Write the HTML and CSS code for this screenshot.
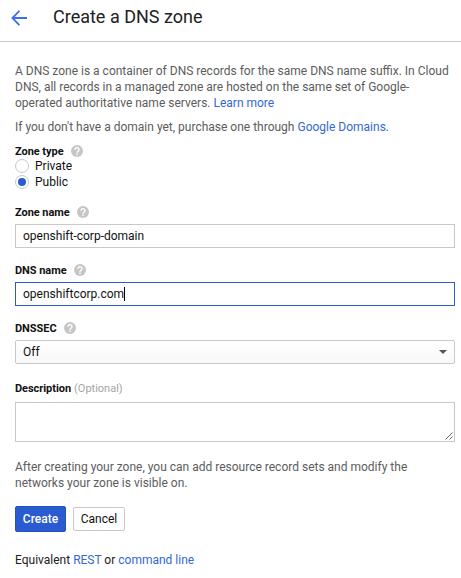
FILE: index.html
```html
<!DOCTYPE html>
<html lang="en">
<head>
<meta charset="utf-8">
<title>Create a DNS zone</title>
<link rel="stylesheet" href="styles.css">
</head>
<body>
<svg class="defs" aria-hidden="true"><symbol id="help" viewBox="0 0 12 12"><circle cx="6" cy="6" r="6" fill="#c6c6c6"/><path d="M4 4.7a2 1.9 0 1 1 3.1 1.45C6.4 6.65 6 6.9 6 7.7M6 8.5v1.4" fill="none" stroke="#fff" stroke-width="1.4"/></symbol></svg>
<header class="header">
  <svg class="back" viewBox="0 0 16 16"><path d="M16 8H1.6M8.4 .9L1.4 8l7 7.1" fill="none" stroke="#3b70e7" stroke-width="1.8"/></svg>
  <h1 class="title">Create a DNS zone</h1>
</header>
<main class="content">
  <p class="text intro">A DNS zone is a container of DNS records for the same DNS name suffix. In Cloud<br>DNS, all records in a managed zone are hosted on the same set of Google-<br>operated authoritative name servers. <a>Learn more</a></p>
  <p class="text purchase">If you don't have a domain yet, purchase one through <a>Google Domains</a>.</p>
  <section class="zone-type">
    <div class="label"><span>Zone type</span><svg class="help"><use href="#help"/></svg></div>
    <div class="option"><span class="radio"></span>Private</div>
    <div class="option"><span class="radio checked"></span>Public</div>
  </section>
  <section class="field">
    <div class="label"><span>Zone name</span><svg class="help"><use href="#help"/></svg></div>
    <div class="input"><span>openshift-corp-domain</span></div>
  </section>
  <section class="field">
    <div class="label"><span>DNS name</span><svg class="help"><use href="#help"/></svg></div>
    <div class="input focused"><span>openshiftcorp.com</span><i class="caret"></i></div>
  </section>
  <section class="field">
    <div class="label"><span>DNSSEC</span><svg class="help"><use href="#help"/></svg></div>
    <div class="input select"><span>Off</span><svg class="arrow" viewBox="0 0 8 4"><path d="M0 0h8L4 4z" fill="#555"/></svg></div>
  </section>
  <section class="field description">
    <div class="label"><span>Description</span><span class="optional">(Optional)</span></div>
    <div class="area"><svg class="grip" viewBox="0 0 8 8"><path d="M.5 7.5l7-7M4.5 7.5l3-3" fill="none" stroke="#555" stroke-width=".9"/></svg></div>
  </section>
  <p class="text after">After creating your zone, you can add resource record sets and modify the<br>networks your zone is visible on.</p>
  <div class="actions"><div class="button primary">Create</div><div class="button">Cancel</div></div>
  <p class="text equivalent">Equivalent <a>REST</a> or <a>command line</a></p>
</main>
</body>
</html>
```
FILE: styles.css
```css
* { box-sizing: border-box; }
body { margin: 0; background: #fff; color: #212121; font: 12px/16px Roboto, sans-serif; }
.defs { display: none; }
.header { display: flex; align-items: center; height: 42px; padding: 0 0 7px 11px; border-bottom: 1px solid #c9c9c9; }
.back { width: 16px; height: 16px; margin-top: 1px; }
.title { margin: 0 0 0 26px; font-size: 18px; line-height: 24px; font-weight: 400; }
.content { padding: 21px 6px 0 15px; }
.text { margin: 0; color: #5c5c5c; white-space: nowrap; }
a { color: #3367d6; }
.purchase { margin-top: 8px; }
.zone-type { margin-top: 8px; }
.label { display: flex; align-items: center; height: 16px; font-size: 11px; font-weight: 700; letter-spacing: -.05px; color: #111; }
.label span { padding-top: 1px; }
.help { width: 12px; height: 12px; margin-left: 7px; }
.zone-type .label { height: 15px; padding-top: 1px; }
.option { display: flex; align-items: center; height: 16px; color: #111; }
.radio { display: flex; align-items: center; justify-content: center; width: 14px; height: 14px; margin-right: 6px; border: 1px solid #c9c9c9; border-radius: 50%; }
.checked::after { content: ""; width: 8px; height: 8px; border-radius: 50%; background: #2a5bd0; }
.field { margin-top: 14px; }
.input { display: flex; align-items: center; height: 24px; margin-top: 4px; padding: 0 7px; border: 1px solid #c9c9c9; color: #111; }
.focused { border-color: #2a5bc8; }
.caret { width: 1px; height: 14px; background: #000; }
.select { justify-content: space-between; border-radius: 2px; background: linear-gradient(#fff, #f8f8f8); }
.arrow { width: 8px; height: 4px; }
.description { margin-top: 16px; }
.label .optional { margin-left: 3px; font-weight: 400; letter-spacing: 0; color: #a5a5a5; }
.area { display: flex; align-items: flex-end; justify-content: flex-end; height: 40px; margin-top: 6px; padding: 1px; border: 1px solid #c9c9c9; }
.grip { width: 8px; height: 8px; }
.after { margin-top: 17px; }
.actions { display: flex; align-items: center; gap: 7px; margin-top: 15px; }
.button { display: flex; align-items: center; justify-content: center; width: 52px; height: 24px; border: 1px solid #c9c9c9; border-radius: 2px; color: #111; }
.primary { width: 51px; height: 26px; border-color: #2353bd; background: #2a5bd0; color: #fff; font-weight: 500; }
.equivalent { margin-top: 20px; color: #212121; }
```
